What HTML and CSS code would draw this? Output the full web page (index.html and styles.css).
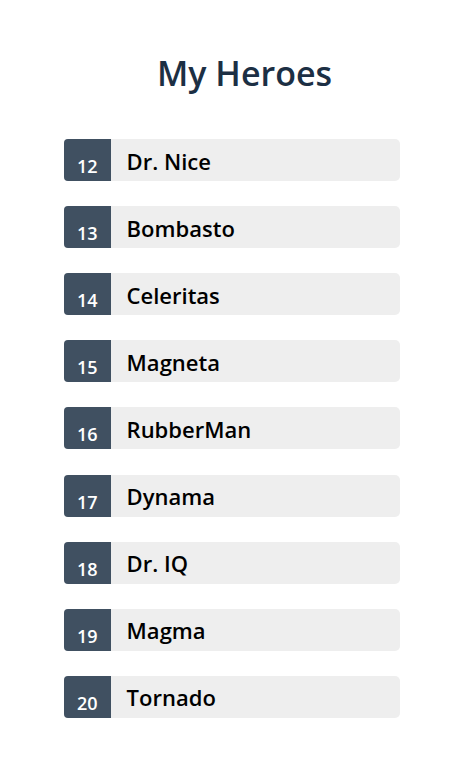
FILE: index.html
```
<!DOCTYPE html>
<html>
<head>
<meta charset="utf-8">
<link rel="stylesheet" href="styles.css">
</head>
<body>
<main class="page">
  <h2 class="title">My Heroes</h2>
  <ul class="heroes">
    <li><button class="hero"><span class="badge">12</span><span class="name">Dr. Nice</span></button></li>
    <li><button class="hero"><span class="badge">13</span><span class="name">Bombasto</span></button></li>
    <li><button class="hero"><span class="badge">14</span><span class="name">Celeritas</span></button></li>
    <li><button class="hero"><span class="badge">15</span><span class="name">Magneta</span></button></li>
    <li><button class="hero"><span class="badge">16</span><span class="name">RubberMan</span></button></li>
    <li><button class="hero"><span class="badge">17</span><span class="name">Dynama</span></button></li>
    <li><button class="hero"><span class="badge">18</span><span class="name">Dr. IQ</span></button></li>
    <li><button class="hero"><span class="badge">19</span><span class="name">Magma</span></button></li>
    <li><button class="hero"><span class="badge">20</span><span class="name">Tornado</span></button></li>
  </ul>
</main>
</body>
</html>
```
FILE: styles.css
```
html, body {
  margin: 0;
  padding: 0;
  background: #ffffff;
}
body {
  font-family: "Open Sans", "Noto Sans", sans-serif;
}
.page {
  padding: 0 0 0 64px;
}
.title {
  margin: 0;
  padding: 48px 0 0 93px;
  height: 90px;
  box-sizing: border-box;
  font-size: 34px;
  font-weight: 600;
  line-height: 50px;
  color: #1c2f44;
}
.heroes {
  list-style: none;
  margin: 49px 0 0 0;
  padding: 0;
  width: 336px;
  display: flex;
  flex-direction: column;
  gap: 25.12px;
}
.hero {
  display: flex;
  align-items: stretch;
  width: 100%;
  height: 42px;
  padding: 0;
  margin: 0;
  border: 0;
  border-radius: 4px 5px 5px 4px;
  background: #eeeeee;
  font-family: inherit;
  text-align: left;
  cursor: pointer;
}
.badge {
  display: flex;
  align-items: flex-end;
  box-sizing: border-box;
  padding: 0 13px 5px;
  background: #405061;
  color: #ffffff;
  font-size: 18px;
  font-weight: 600;
  line-height: 20px;
  border-radius: 4px 0 0 4px;
}
.name {
  display: flex;
  align-items: center;
  margin-left: 16px;
  padding-top: 1px;
  font-size: 22px;
  font-weight: 600;
  color: #000000;
}
```
